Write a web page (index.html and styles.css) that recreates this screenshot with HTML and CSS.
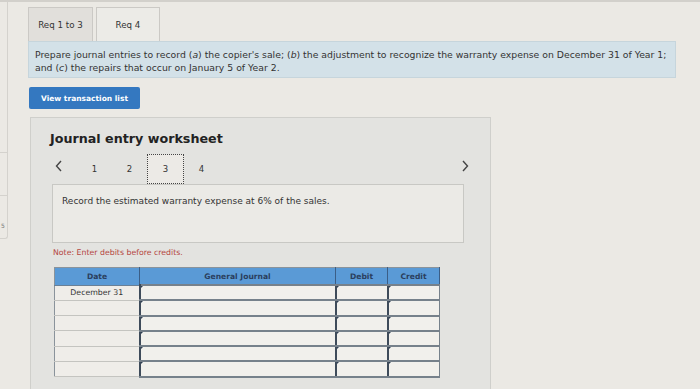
FILE: index.html
```html
<!DOCTYPE html>
<html lang="en">
<head>
<meta charset="utf-8">
<title>Journal entry worksheet</title>
<link rel="stylesheet" href="styles.css">
</head>
<body>
<div class="page">
  <div class="rail">
    <div class="rail-seg"></div>
    <div class="rail-seg"></div>
    <div class="rail-seg rail-last"><span class="rail-num">5</span></div>
  </div>
  <div class="main">
    <div class="tabs">
      <div class="tab">Req 1 to 3</div>
      <div class="tab tab-active">Req 4</div>
    </div>
    <div class="instructions">
      Prepare journal entries to record (<i>a</i>) the copier's sale; (<i>b</i>) the adjustment to recognize the warranty expense on December 31 of Year 1;<br>
      and (<i>c</i>) the repairs that occur on January 5 of Year 2.
    </div>
    <button class="btn">View transaction list</button>
    <div class="panel">
      <h2 class="title">Journal entry worksheet</h2>
      <div class="nav">
        <span class="arrow arrow-left"><svg width="7" height="12" viewBox="0 0 7 12"><path d="M6 1 L1.5 6 L6 11" fill="none" stroke="#444" stroke-width="1.4"/></svg></span>
        <div class="steps">
          <span class="step">1</span>
          <span class="step">2</span>
          <span class="step step-current">3</span>
          <span class="step">4</span>
        </div>
        <span class="arrow arrow-right"><svg width="7" height="12" viewBox="0 0 7 12"><path d="M1 1 L5.5 6 L1 11" fill="none" stroke="#444" stroke-width="1.4"/></svg></span>
      </div>
      <div class="desc">Record the estimated warranty expense at 6% of the sales.</div>
      <div class="note">Note: Enter debits before credits.</div>
      <table class="journal">
        <thead>
          <tr><th class="c-date">Date</th><th class="c-gj">General Journal</th><th class="c-num">Debit</th><th class="c-num">Credit</th></tr>
        </thead>
        <tbody>
          <tr><td class="date">December 31</td><td class="in"></td><td class="in"></td><td class="in"></td></tr>
          <tr><td class="date"></td><td class="in"></td><td class="in"></td><td class="in"></td></tr>
          <tr><td class="date"></td><td class="in"></td><td class="in"></td><td class="in"></td></tr>
          <tr><td class="date"></td><td class="in"></td><td class="in"></td><td class="in"></td></tr>
          <tr><td class="date"></td><td class="in"></td><td class="in"></td><td class="in"></td></tr>
          <tr><td class="date"></td><td class="in"></td><td class="in"></td><td class="in"></td></tr>
        </tbody>
      </table>
    </div>
  </div>
</div>
</body>
</html>
```
FILE: styles.css
```css
html, body {
  margin: 0;
  padding: 0;
}
body {
  background: #ebe9e4;
  font-family: "DejaVu Sans", Verdana, sans-serif;
  color: #333;
  border-top: 2px solid #d2d0cb;
  height: 387px;
  overflow: hidden;
}
.page {
  display: flex;
  align-items: flex-start;
}
.rail {
  width: 8px;
  height: 236px;
  display: flex;
  flex-direction: column;
}
.rail-seg {
  height: 42px;
  border-right: 1px solid #d4d2cd;
  border-bottom: 1px solid #d4d2cd;
  flex: none;
}
.rail-seg:first-child {
  height: 150px;
}
.rail-last {
  border-bottom-right-radius: 3px;
  position: relative;
}
.rail-num {
  position: absolute;
  left: 1px;
  top: 26px;
  font-size: 6px;
  color: #777;
}
.main {
  padding: 5px 0 0 20px;
  width: 648px;
}
.tabs {
  display: flex;
  gap: 3px;
  align-items: flex-end;
}
.tab {
  width: 65px;
  height: 34px;
  box-sizing: border-box;
  border: 1px solid #cbc9c5;
  border-bottom: none;
  background: #e1dfdb;
  font-size: 8.7px;
  display: flex;
  align-items: center;
  justify-content: center;
  color: #333;
}
.tab-active {
  background: #ecebe7;
  width: 64px;
}
.instructions {
  background: #d3e1e8;
  border: 1px solid #c6d5dc;
  box-sizing: border-box;
  height: 37px;
  padding: 7px 6px;
  font-size: 9.3px;
  line-height: 12.5px;
  color: #333;
}
.btn {
  display: block;
  margin: 9px 0 0 1px;
  width: 111px;
  height: 22px;
  background: #3478c0;
  border: none;
  border-radius: 2px;
  color: #fff;
  font-family: "DejaVu Sans", Verdana, sans-serif;
  font-weight: bold;
  font-size: 7.5px;
  padding: 0;
}
.panel {
  margin: 8px 0 0 2px;
  width: 461px;
  height: 300px;
  box-sizing: border-box;
  background: #e3e3e0;
  border: 1px solid #cfcfcb;
  padding: 0 0 0 21px;
}
.title {
  margin: 12px 0 0 -2px;
  font-size: 12.7px;
  font-weight: bold;
  color: #222;
  line-height: 18px;
}
.nav {
  display: flex;
  align-items: center;
  width: 417px;
  height: 30px;
  margin-top: 6px;
}
.arrow {
  width: 25px;
  height: 12px;
  display: flex;
  justify-content: center;
  margin-top: -6px;
}
.arrow-left {
  justify-content: flex-start;
  box-sizing: border-box;
  padding-left: 3px;
}
.arrow-right {
  margin-left: auto;
  justify-content: flex-end;
}
.steps {
  display: flex;
}
.step {
  width: 35px;
  height: 30px;
  display: flex;
  align-items: center;
  justify-content: center;
  font-size: 8.5px;
  color: #333;
  box-sizing: border-box;
}
.step-current {
  border: 1px dotted #444;
  width: 37px;
  background: #eceae6;
}
.desc {
  width: 412px;
  height: 59px;
  box-sizing: border-box;
  background: #ebeae6;
  border: 1px solid #c8c8c4;
  padding: 11px 9px;
  font-size: 9px;
  color: #333;
}
.note {
  margin: 5px 0 0 1px;
  font-size: 7.8px;
  color: #b4463f;
  line-height: 10px;
}
.journal {
  margin: 9px 0 0 2px;
  border-collapse: collapse;
  width: 381px;
  table-layout: fixed;
  border: 1px solid #8a939b;
}
.journal th {
  background: #5a9ad6;
  color: #2a3f5e;
  font-size: 7.6px;
  font-weight: bold;
  height: 16px;
  padding: 0;
  border-right: 1px solid #3b5e86;
  border-bottom: 1px solid #6a8096;
}
.c-date { width: 84px; }
.c-gj { width: 195px; }
.c-num { width: 51px; }
.journal td {
  padding: 0;
  height: 13.3px;
}
.journal td.date {
  background: #efede9;
  border-bottom: 1px solid #c4c4c0;
  text-align: center;
  font-size: 7.8px;
  color: #333;
}
.journal td.in {
  background: #f1f0ec;
  border-top: 2px solid #76818b;
  border-bottom: 2px solid #76818b;
  border-left: 2px solid #3e4b5a;
  border-right: 1px solid #76818b;
  position: relative;
}
.journal td.in::before {
  content: "";
  position: absolute;
  left: 0;
  top: 0;
  border-left: 2px solid #2f3e52;
  border-bottom: 2px solid transparent;
}
```
